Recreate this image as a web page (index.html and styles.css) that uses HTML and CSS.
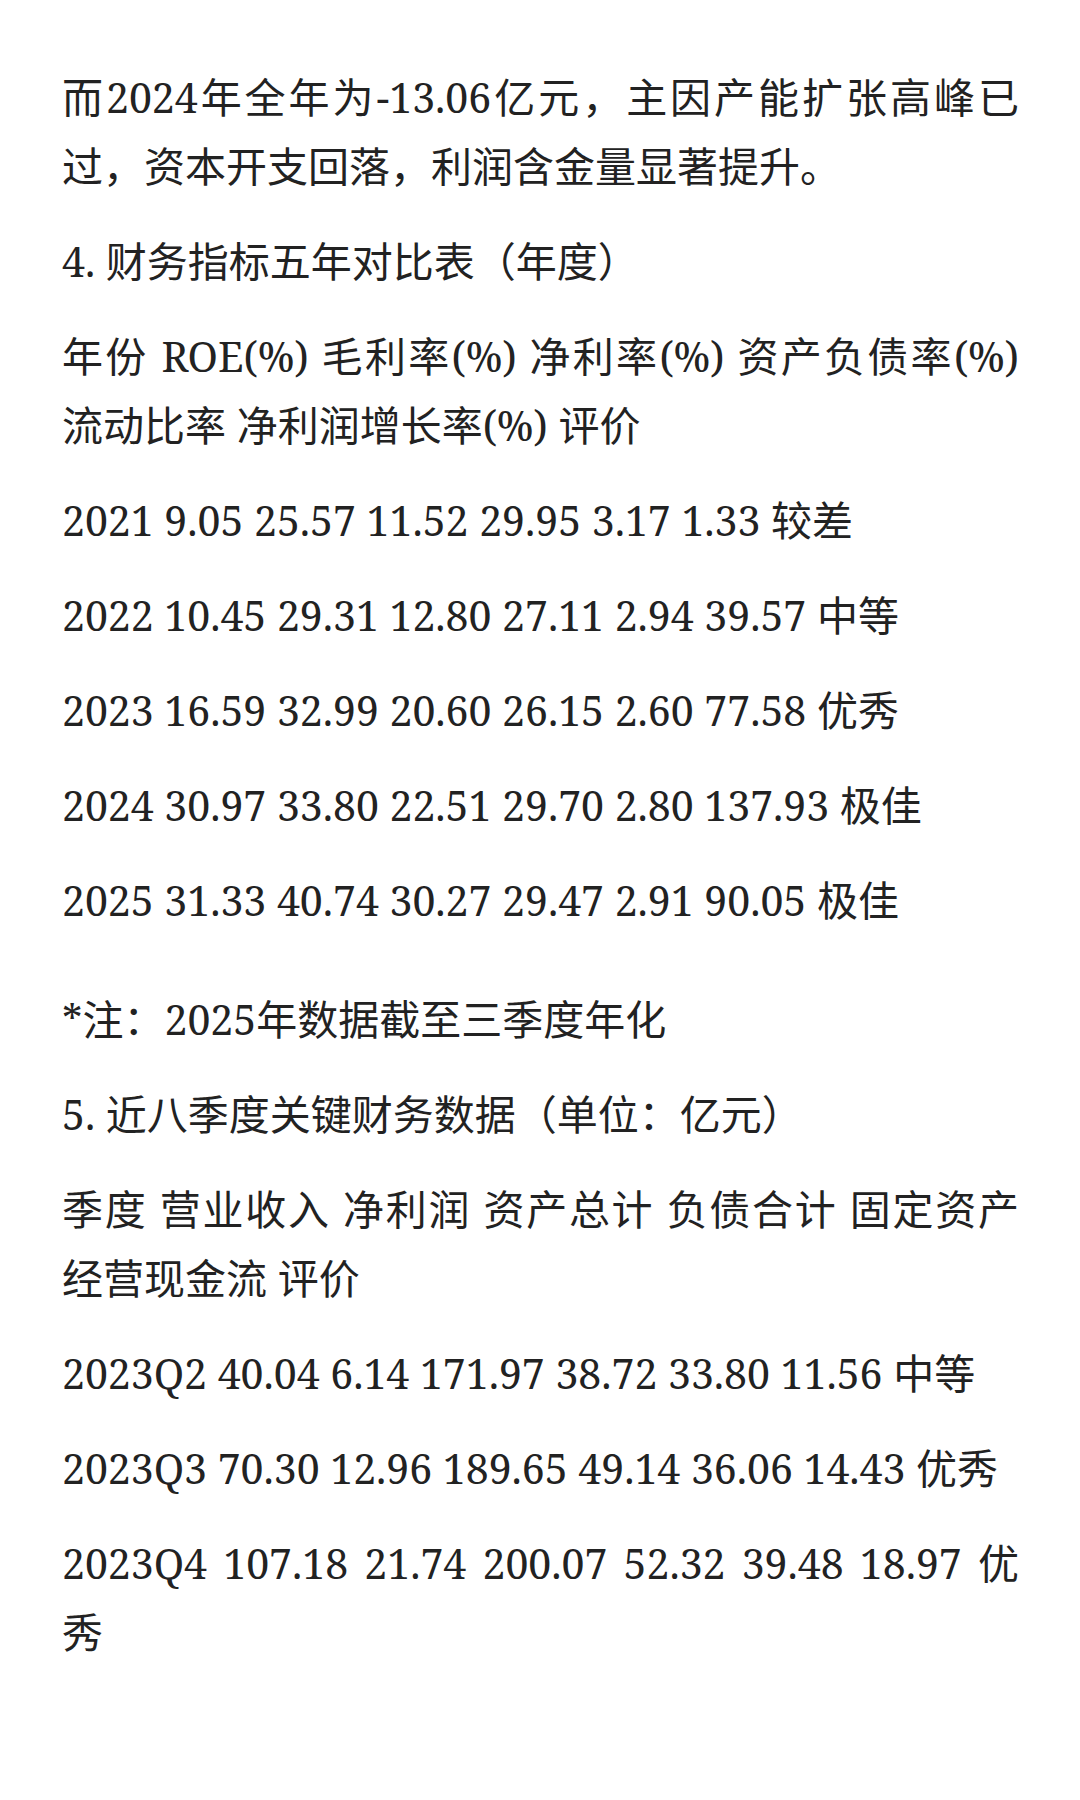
FILE: index.html
```html
<!DOCTYPE html>
<html lang="zh-CN">
<head>
<meta charset="utf-8">
<title>财务数据</title>
<link rel="stylesheet" href="styles.css">
</head>
<body>
<article class="article">
  <p class="para">而2024年全年为-13.06亿元，主因产能扩张高峰已过，资本开支回落，利润含金量显著提升。</p>
  <p class="para">4. 财务指标五年对比表（年度）</p>
  <p class="para">年份 ROE(%) 毛利率(%) 净利率(%) 资产负债率(%) 流动比率 净利润增长率(%) 评价</p>
  <p class="para">2021 9.05 25.57 11.52 29.95 3.17 1.33 较差</p>
  <p class="para">2022 10.45 29.31 12.80 27.11 2.94 39.57 中等</p>
  <p class="para">2023 16.59 32.99 20.60 26.15 2.60 77.58 优秀</p>
  <p class="para">2024 30.97 33.80 22.51 29.70 2.80 137.93 极佳</p>
  <p class="para">2025 31.33 40.74 30.27 29.47 2.91 90.05 极佳</p>
  <p class="para note">*注：2025年数据截至三季度年化</p>
  <p class="para">5. 近八季度关键财务数据（单位：亿元）</p>
  <p class="para">季度 营业收入 净利润 资产总计 负债合计 固定资产 经营现金流 评价</p>
  <p class="para">2023Q2 40.04 6.14 171.97 38.72 33.80 11.56 中等</p>
  <p class="para">2023Q3 70.30 12.96 189.65 49.14 36.06 14.43 优秀</p>
  <p class="para">2023Q4 107.18 21.74 200.07 52.32 39.48 18.97 优秀</p>
</article>
</body>
</html>
```

FILE: styles.css
```css
html, body {
  margin: 0;
  padding: 0;
  background: #ffffff;
}

.article {
  padding: 63px 61px 0 62px;
  font-family: "Noto Serif", "Liberation Serif", "Noto Sans CJK SC", serif;
  font-size: 41px;
  line-height: 69px;
  color: #222222;
  text-align: justify;
}

.para {
  margin: 0 0 26px 0;
}

.note {
  margin-top: 50px;
}
```
